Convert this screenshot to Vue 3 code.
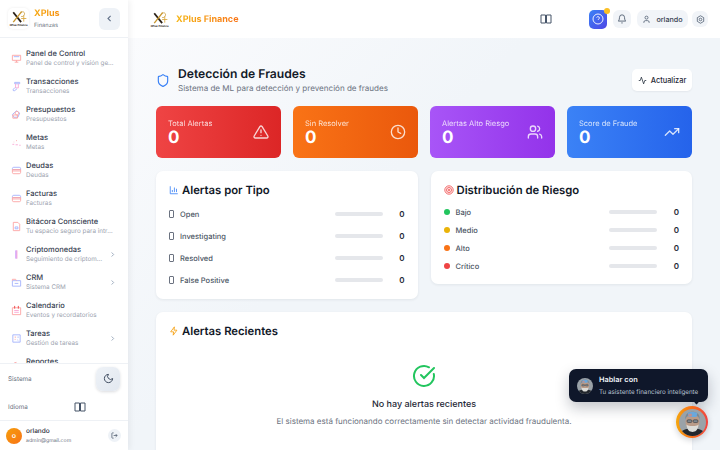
<script setup>
const blue = '#a5b4fc', red = '#fca5a5', pink = '#f9a8d4'
const nav = [
  { t: 'Panel de Control', s: 'Panel de control y visión general', icon: [[red, 'M3 5h18v11H3z'], [red, 'M8 20h8M12 16v4'], [blue, 'M6 8h12']] },
  { t: 'Transacciones', s: 'Transacciones', icon: [[blue, 'M8 3h11v3H8z'], [pink, 'M10 6v9l6 0V6'], [blue, 'M9 14l-4 4v3h3l5-4']] },
  { t: 'Presupuestos', s: 'Presupuestos', icon: [[blue, 'M12 4l7 5-4 9H6l-3-6z'], [red, 'M4 13h10v7H4z'], [red, 'M9 9a4 4 0 1 1 0 .1']] },
  { t: 'Metas', s: 'Metas', icon: [[pink, 'M3 16h4M10 17h5M18 18h3'], [red, 'M12 7v2M6 11h1']] },
  { t: 'Deudas', s: 'Deudas', icon: [[blue, 'M3 8a3 3 0 0 1 3-3h12a3 3 0 0 1 3 3v2H3z'], [red, 'M3 10h18v6a3 3 0 0 1-3 3H6a3 3 0 0 1-3-3z'], [red, 'M3 13h18']] },
  { t: 'Facturas', s: 'Facturas', icon: [[blue, 'M3 8a3 3 0 0 1 3-3h12a3 3 0 0 1 3 3v2H3z'], [red, 'M3 10h18v6a3 3 0 0 1-3 3H6a3 3 0 0 1-3-3z'], [red, 'M3 13h18']] },
  { t: 'Bitácora Consciente', s: 'Tu espacio seguro para introspección', icon: [[red, 'M5 3h10l4 4v14H5z'], [blue, 'M9 13h6v4H9z']] },
  { t: 'Criptomonedas', s: 'Seguimiento de criptomonedas', chev: true, icon: [['#a855f7', 'M11 3v18'], [pink, 'M13 3v18']] },
  { t: 'CRM', s: 'Sistema CRM', chev: true, icon: [[blue, 'M3 8h18v12H3z'], [red, 'M3 8V5h7l2 3'], [blue, 'M8 14h8']] },
  { t: 'Calendario', s: 'Eventos y recordatorios', icon: [[red, 'M3 6h18v15H3z'], ['#ef4444', 'M8 2v6M16 2v6'], [pink, 'M7 12h10M7 16h10']] },
  { t: 'Tareas', s: 'Gestión de tareas', chev: true, icon: [[blue, 'M4 4h16v16H4z'], [red, 'M8 9h3M8 14h2'], [blue, 'M14 9h3M14 15l2 2']] },
  { t: 'Reportes', s: 'Reportes', icon: [[red, 'M12 3a9 9 0 1 0 9 9'], [blue, 'M12 7v5l4 0']] },
]
const stats = [
  { l: 'Total Alertas', c: 'red', d: ['M10.3 3.9 1.8 18a2 2 0 0 0 1.7 3h17a2 2 0 0 0 1.7-3L13.7 3.9a2 2 0 0 0-3.4 0z', 'M12 9v4', 'M12 17h.01'] },
  { l: 'Sin Resolver', c: 'orange', d: ['M12 2a10 10 0 1 0 0 20 10 10 0 0 0 0-20z', 'M12 6v6l4 2'] },
  { l: 'Alertas Alto Riesgo', c: 'purple', d: ['M16 21v-2a4 4 0 0 0-4-4H6a4 4 0 0 0-4 4v2', 'M9 3a4 4 0 1 0 0 8 4 4 0 0 0 0-8z', 'M22 21v-2a4 4 0 0 0-3-3.87', 'M16 3.13a4 4 0 0 1 0 7.75'] },
  { l: 'Score de Fraude', c: 'blue', d: ['M22 7l-8.5 8.5-5-5L2 17', 'M16 7h6v6'] },
]
const types = ['Open', 'Investigating', 'Resolved', 'False Positive']
const risks = [
  { l: 'Bajo', c: '#22c55e' }, { l: 'Medio', c: '#eab308' }, { l: 'Alto', c: '#f97316' }, { l: 'Crítico', c: '#ef4444' },
]
</script>

<template>
  <div class="app">
    <svg class="defs" width="0" height="0" aria-hidden="true">
      <symbol id="logo" viewBox="0 0 40 40">
        <path d="M10 8l15 19" stroke="#2a2118" stroke-width="3.400" fill="none" />
        <path d="M26 7 10 27" stroke="#c8962e" stroke-width="2.600" fill="none" />
        <path d="M24 8c5-2 9 0 7 5-1 3-4 4-6 3" stroke="#c8962e" stroke-width="1.400" fill="none" />
        <path d="M30 14v12M25 20h10" stroke="#d9a63a" stroke-width="1.600" fill="none" />
        <text x="20" y="35" text-anchor="middle" font-size="5" font-weight="700" fill="#2a2118" font-family="Inter, sans-serif">XPlus Finance</text>
      </symbol>
      <symbol id="man" viewBox="0 0 40 40">
        <rect width="40" height="40" fill="#9aa2a8" />
        <path d="M0 40c2-9 10-11 20-11s18 2 20 11z" fill="#23272d" />
        <ellipse cx="20" cy="19" rx="10.500" ry="13" fill="#b99b88" />
        <path d="M9 16C9 7 14 4 20 4s11 3 11 12c-2-5-5-7-11-7S11 11 9 16z" fill="#7c8a96" />
        <path d="M13 6c3-2 10-2 14 0l-1 6H14z" fill="#6aa8dc" />
        <path d="M14 7h5v4h-5z" fill="#d98a78" opacity=".8" />
        <path d="M11 23c1 9 5 11 9 11s8-2 9-11c-3 3-15 3-18 0z" fill="#dcdcd8" />
        <rect x="12" y="16" width="7" height="4" rx="1.500" fill="#7d868e" stroke="#2b3036" stroke-width=".8" />
        <rect x="21" y="16" width="7" height="4" rx="1.500" fill="#7d868e" stroke="#2b3036" stroke-width=".8" />
      </symbol>
    </svg>

    <aside class="side">
      <div class="side-head">
        <svg class="logo-s"><use href="#logo" /></svg>
        <div class="brand">
          <div class="brand-t">XPlus</div>
          <div class="brand-s">Finanzas</div>
        </div>
        <button class="collapse">
          <svg viewBox="0 0 24 24" width="9" height="9" fill="none" stroke="#64748b" stroke-width="3"><path d="M15 5l-7 7 7 7" /></svg>
        </button>
      </div>
      <nav class="nav">
        <div v-for="n in nav" :key="n.t" class="item">
          <svg class="ico" viewBox="0 0 24 24" fill="none" stroke-width="2">
            <path v-for="(p, i) in n.icon" :key="i" :d="p[1]" :stroke="p[0]" />
          </svg>
          <div class="item-txt">
            <div class="item-t">{{ n.t }}</div>
            <div class="item-s">{{ n.s }}</div>
          </div>
          <svg v-if="n.chev" class="chev" viewBox="0 0 24 24" fill="none" stroke="#94a3b8" stroke-width="3"><path d="M9 5l7 7-7 7" /></svg>
        </div>
      </nav>
      <div class="side-foot">
        <div class="foot-row sys">
          <span>Sistema</span>
          <button class="theme">
            <svg viewBox="0 0 24 24" width="11" height="11" fill="none" stroke="#334155" stroke-width="2"><path d="M12 3a6 6 0 0 0 9 9 9 9 0 1 1-9-9z" /></svg>
          </button>
        </div>
        <div class="foot-row lang">
          <span>Idioma</span>
          <svg class="lang-ico" viewBox="0 0 24 24" fill="none" stroke="#475569" stroke-width="2"><path d="M2 4h9v16H2zM13 4h9v16h-9z" /></svg>
        </div>
        <div class="user">
          <div class="user-av">o</div>
          <div class="user-txt">
            <div class="user-n">orlando</div>
            <div class="user-m">admin@gmail.com</div>
          </div>
          <button class="logout">
            <svg viewBox="0 0 24 24" width="7" height="7" fill="none" stroke="#475569" stroke-width="2.500"><path d="M9 21H5a2 2 0 0 1-2-2V5a2 2 0 0 1 2-2h4M16 17l5-5-5-5M21 12H9" /></svg>
          </button>
        </div>
      </div>
    </aside>

    <div class="main">
      <header class="top">
        <svg class="logo-t"><use href="#logo" /></svg>
        <div class="top-brand">XPlus Finance</div>
        <svg class="top-lang" viewBox="0 0 24 24" fill="none" stroke="#475569" stroke-width="2"><path d="M2 4h9v16H2zM13 4h9v16h-9z" /></svg>
        <button class="help">
          <svg viewBox="0 0 24 24" width="12" height="12" fill="none" stroke="#fff" stroke-width="1.800"><circle cx="12" cy="12" r="10" /><path d="M9.200 9a3 3 0 0 1 5.700 1c0 2-3 2.600-3 4M12 17.500h.01" /></svg>
          <i class="help-dot"></i>
        </button>
        <button class="bell">
          <svg viewBox="0 0 24 24" width="10" height="10" fill="none" stroke="#475569" stroke-width="2"><path d="M6 8a6 6 0 0 1 12 0c0 7 3 9 3 9H3s3-2 3-9M10.300 21a2 2 0 0 0 3.400 0" /></svg>
        </button>
        <div class="pill">
          <svg viewBox="0 0 24 24" width="9" height="9" fill="none" stroke="#475569" stroke-width="2"><path d="M19 21v-2a4 4 0 0 0-4-4H9a4 4 0 0 0-4 4v2M12 3a4 4 0 1 0 0 8 4 4 0 0 0 0-8z" /></svg>
          <span>orlando</span>
        </div>
        <button class="gear">
          <svg viewBox="0 0 24 24" width="9" height="9" fill="none" stroke="#475569" stroke-width="2"><path d="M12 2l8.500 5v10L12 22l-8.500-5V7z" /><circle cx="12" cy="12" r="3.500" /></svg>
        </button>
      </header>

      <main class="content">
        <div class="title-row">
          <svg class="shield" viewBox="0 0 24 24" fill="none" stroke="#3b82f6" stroke-width="2"><path d="M20 13c0 5-3.500 7.500-7.700 9a1 1 0 0 1-.6 0C7.500 20.500 4 18 4 13V6a1 1 0 0 1 1-1c2 0 4.500-1.200 6.200-2.700a1.200 1.200 0 0 1 1.600 0C14.500 3.800 17 5 19 5a1 1 0 0 1 1 1z" /></svg>
          <div class="title-txt">
            <h1>Detección de Fraudes</h1>
            <p>Sistema de ML para detección y prevención de fraudes</p>
          </div>
          <button class="refresh">
            <svg viewBox="0 0 24 24" width="9" height="9" fill="none" stroke="#1f2937" stroke-width="2"><path d="M22 12h-4l-3 9L9 3l-3 9H2" /></svg>
            Actualizar
          </button>
        </div>

        <div class="stats">
          <div v-for="s in stats" :key="s.l" class="stat" :class="s.c">
            <div>
              <div class="stat-l">{{ s.l }}</div>
              <div class="stat-v">0</div>
            </div>
            <svg class="stat-i" viewBox="0 0 24 24" fill="none" stroke-width="2" stroke-linecap="round" stroke-linejoin="round">
              <path v-for="d in s.d" :key="d" :d="d" />
            </svg>
          </div>
        </div>

        <div class="cols">
          <section class="card">
            <h2>
              <svg viewBox="0 0 24 24" fill="none" stroke="#3b82f6" stroke-width="2"><path d="M3 3v18h18M8 17v-5M13 17V6M18 17v-8" /></svg>
              Alertas por Tipo
            </h2>
            <div class="rows t">
              <div v-for="x in types" :key="x" class="row">
                <span class="ph"></span>
                <span class="row-l">{{ x }}</span>
                <span class="bar"></span>
                <b>0</b>
              </div>
            </div>
          </section>
          <section class="card">
            <h2>
              <svg viewBox="0 0 24 24" fill="none" stroke="#ef4444" stroke-width="2"><circle cx="12" cy="12" r="10" /><circle cx="12" cy="12" r="6" /><circle cx="12" cy="12" r="2" /></svg>
              Distribución de Riesgo
            </h2>
            <div class="rows r">
              <div v-for="x in risks" :key="x.l" class="row">
                <span class="dot" :style="{ background: x.c }"></span>
                <span class="row-l">{{ x.l }}</span>
                <span class="bar"></span>
                <b>0</b>
              </div>
            </div>
          </section>
        </div>

        <section class="card recent">
          <h2>
            <svg viewBox="0 0 24 24" fill="none" stroke="#f59e0b" stroke-width="2"><path d="M13 2 4 14h7l-1 8 9-12h-7z" /></svg>
            Alertas Recientes
          </h2>
          <div class="empty">
            <svg viewBox="0 0 24 24" fill="none" stroke="#22c55e" stroke-width="2" stroke-linecap="round"><path d="M21.800 10A10 10 0 1 1 17 3.300M9 11l3 3L22 4" /></svg>
            <div class="empty-t">No hay alertas recientes</div>
            <div class="empty-s">El sistema está funcionando correctamente sin detectar actividad fraudulenta.</div>
          </div>
        </section>
      </main>
    </div>

    <div class="tip">
      <svg class="tip-av"><use href="#man" /></svg>
      <div>
        <div class="tip-t">Hablar con</div>
        <div class="tip-s">Tu asistente financiero inteligente</div>
      </div>
      <i class="tip-arrow"></i>
    </div>
    <div class="fab"><svg><use href="#man" /></svg></div>
  </div>
</template>

<style>
html, body { margin: 0; padding: 0; }
</style>

<style scoped>
* { box-sizing: border-box; }
button { border: 0; padding: 0; display: flex; align-items: center; justify-content: center; font-family: inherit; }
.defs { flex: none; }
.app {
  position: relative; display: flex; width: 720px; height: 450px; overflow: hidden;
  font-family: Inter, "Liberation Sans", sans-serif; color: #111827; background: #f3f6fa;
  text-rendering: geometricPrecision;
}
.side {
  flex: none; width: 128px; display: flex; flex-direction: column; background: #fff;
  box-shadow: 2px 0 6px rgba(15, 23, 42, .06); z-index: 2;
}
.side-head { flex: none; height: 38px; display: flex; align-items: center; padding: 0 8px; border-bottom: 1px solid #eef1f5; }
.logo-s { width: 21px; height: 21px; flex: none; border-radius: 5px; box-shadow: 0 0 3px rgba(0, 0, 0, .08); }
.brand { margin-left: 5px; flex: 1; }
.brand-t { font-size: 9px; font-weight: 700; line-height: 13px; color: #f59e0b; background: linear-gradient(90deg, #f5a70f, #f97316); -webkit-background-clip: text; background-clip: text; -webkit-text-fill-color: transparent; }
.brand-s { font-size: 5.700px; line-height: 10px; color: #6b7280; margin-top: 1px; }
.collapse { width: 21px; height: 22px; border-radius: 6px; background: #eef2f7; }
.nav { flex: 1; min-height: 0; overflow: hidden; padding-top: 6px; }
.item { height: 28px; display: flex; align-items: center; padding: 0 12px 0 11px; }
.ico { width: 11px; height: 11px; flex: none; }
.item-txt { margin-left: 4px; flex: 1; min-width: 0; }
.item-t { font-size: 7.500px; line-height: 10px; font-weight: 500; color: #374151; white-space: nowrap; }
.item-s { font-size: 6.300px; line-height: 8px; color: #9ca3af; white-space: nowrap; overflow: hidden; text-overflow: ellipsis; }
.chev { width: 7px; height: 7px; flex: none; margin-left: 3px; }
.side-foot { flex: none; height: 87px; border-top: 1px solid #eef1f5; }
.foot-row { display: flex; align-items: center; font-size: 6.300px; color: #6b7280; padding-left: 8px; }
.sys { height: 29px; justify-content: space-between; padding-right: 8px; }
.theme { width: 24px; height: 24px; border-radius: 7px; background: linear-gradient(135deg, #eef2f7, #e2e8f0); box-shadow: 0 1px 3px rgba(15, 23, 42, .15); }
.lang { height: 27px; }
.lang-ico { width: 12px; height: 12px; margin-left: 46px; }
.user { height: 30px; display: flex; align-items: center; padding: 0 7px 0 6px; border-top: 1px solid #eef1f5; }
.user-av { width: 16px; height: 16px; border-radius: 50%; background: linear-gradient(135deg, #f59e0b, #f97316); color: #fff; font-size: 7px; font-weight: 600; display: flex; align-items: center; justify-content: center; flex: none; }
.user-txt { flex: 1; margin-left: 4px; }
.user-n { font-size: 6.500px; line-height: 9px; font-weight: 500; color: #1f2937; }
.user-m { font-size: 5.200px; line-height: 8px; color: #6b7280; margin-top: 1px; }
.logout { width: 13px; height: 13px; border-radius: 50%; background: #eef2f7; }

.main { flex: 1; min-width: 0; display: flex; flex-direction: column; }
.top { flex: none; height: 38px; background: #fff; display: flex; align-items: center; padding: 0 12px 0 21px; box-shadow: 0 1px 2px rgba(15, 23, 42, .05); }
.logo-t { width: 21px; height: 21px; flex: none; border-radius: 5px; }
.top-brand { margin-left: 6px; font-size: 9px; font-weight: 700; background: linear-gradient(90deg, #f5b30f, #f97316); -webkit-background-clip: text; background-clip: text; -webkit-text-fill-color: transparent; }
.top-lang { width: 12px; height: 12px; margin-left: auto; }
.help { position: relative; width: 18px; height: 19px; margin-left: 37px; border-radius: 5px; background: linear-gradient(135deg, #3b82f6, #4f46e5); }
.help-dot { position: absolute; top: -2px; right: -3px; width: 6px; height: 6px; border-radius: 50%; background: #fbbf24; }
.bell { width: 18px; height: 18px; margin-left: 6px; border-radius: 6px; background: #f1f4f8; }
.pill { height: 18px; width: 51px; margin-left: 6px; display: flex; align-items: center; justify-content: center; gap: 5px; border-radius: 7px; background: #f1f4f8; font-size: 7.200px; font-weight: 500; color: #374151; }
.gear { width: 16px; height: 16px; margin-left: 4px; border-radius: 6px; background: #f1f4f8; }

.content { flex: 1; min-height: 0; overflow: hidden; padding: 29px 28px 0; background: linear-gradient(135deg, #fafbfd, #f1f5f9 40%); }
.title-row { display: flex; align-items: center; height: 26px; }
.shield { width: 14px; height: 15px; flex: none; }
.title-txt { margin-left: 8px; flex: 1; }
h1 { margin: 0; font-size: 12.150px; line-height: 16px; font-weight: 600; color: #111827; }
.title-txt p { margin: 0; font-size: 8.050px; line-height: 12px; color: #6b7280; }
.refresh { width: 60px; height: 22px; gap: 4px; border-radius: 5px; background: #fff; font-size: 7.400px; font-weight: 500; color: #1f2937; box-shadow: 0 1px 2px rgba(15, 23, 42, .06); }

.stats { display: grid; grid-template-columns: repeat(4, 1fr); gap: 12px; margin-top: 13px; }
.stat { height: 52px; border-radius: 6px; padding: 12px; display: flex; align-items: center; justify-content: space-between; color: #fff; }
.red { background: linear-gradient(90deg, #ef4444, #dc2626); }
.orange { background: linear-gradient(90deg, #f97316, #ea580c); }
.purple { background: linear-gradient(90deg, #a855f7, #9333ea); }
.blue { background: linear-gradient(90deg, #3b82f6, #2563eb); }
.stat-l { font-size: 7.500px; line-height: 10px; opacity: .8; }
.stat-v { font-size: 17px; line-height: 16px; font-weight: 700; margin-top: 1px; }
.stat-i { width: 16px; height: 16px; stroke: rgba(255, 255, 255, .8); flex: none; }

.cols { display: grid; grid-template-columns: 1fr 1fr; gap: 13px; margin-top: 13px; align-items: start; }
.card { background: #fff; border-radius: 7px; padding: 13px 13px 10px; box-shadow: 0 1px 3px rgba(15, 23, 42, .07); }
h2 { display: flex; align-items: center; gap: 3px; margin: 0; font-size: 11.300px; line-height: 12px; font-weight: 600; color: #111827; }
h2 svg { width: 10px; height: 10px; flex: none; }
.rows { display: flex; flex-direction: column; }
.rows.t { margin-top: 10px; gap: 6px; padding-bottom: 1px; }
.rows.r { margin-top: 8px; gap: 2px; }
.row { display: flex; align-items: center; height: 16px; }
.ph { width: 5px; height: 8px; border: 1px solid #6b7280; border-radius: 1px; flex: none; margin-right: 6px; }
.dot { width: 6px; height: 6px; border-radius: 50%; flex: none; margin-right: 6px; }
.row-l { flex: 1; font-size: 7.500px; font-weight: 500; color: #4b5563; }
.bar { width: 48px; height: 4px; border-radius: 2px; background: #e5e7eb; flex: none; }
b { width: 22px; text-align: right; font-size: 8px; font-weight: 600; color: #1f2937; flex: none; }
.recent { margin-top: 13px; height: 160px; }
.empty { display: flex; flex-direction: column; align-items: center; margin-top: 27px; }
.empty svg { width: 24px; height: 24px; }
.empty-t { margin-top: 10px; font-size: 9px; line-height: 13px; font-weight: 500; color: #1f2937; }
.empty-s { margin-top: 4px; font-size: 8px; line-height: 12px; color: #6b7280; }

.tip { position: absolute; z-index: 5; left: 569px; top: 369px; width: 139px; height: 33px; display: flex; align-items: center; gap: 6px; padding: 0 8px; border-radius: 7px; background: #0f172a; box-shadow: 0 6px 14px rgba(15, 23, 42, .25); }
.tip-av { width: 16px; height: 16px; border-radius: 50%; flex: none; }
.tip-t { font-size: 7.400px; line-height: 10px; font-weight: 600; color: #f1f5f9; }
.tip-s { font-size: 6.250px; line-height: 9px; color: #b6c0cf; margin-top: 3px; white-space: nowrap; }
.tip-arrow { position: absolute; right: 10px; bottom: -2px; width: 3px; height: 3px; background: #0f172a; transform: rotate(45deg); }
.fab { position: absolute; z-index: 5; left: 676px; top: 406px; width: 32px; height: 32px; border-radius: 50%; padding: 2.500px; background: linear-gradient(90deg, #f5a70f, #f97316 45%, #ef4444); box-shadow: 0 2px 6px rgba(15, 23, 42, .2); }
.fab svg { width: 27px; height: 27px; border-radius: 50%; display: block; }
</style>
